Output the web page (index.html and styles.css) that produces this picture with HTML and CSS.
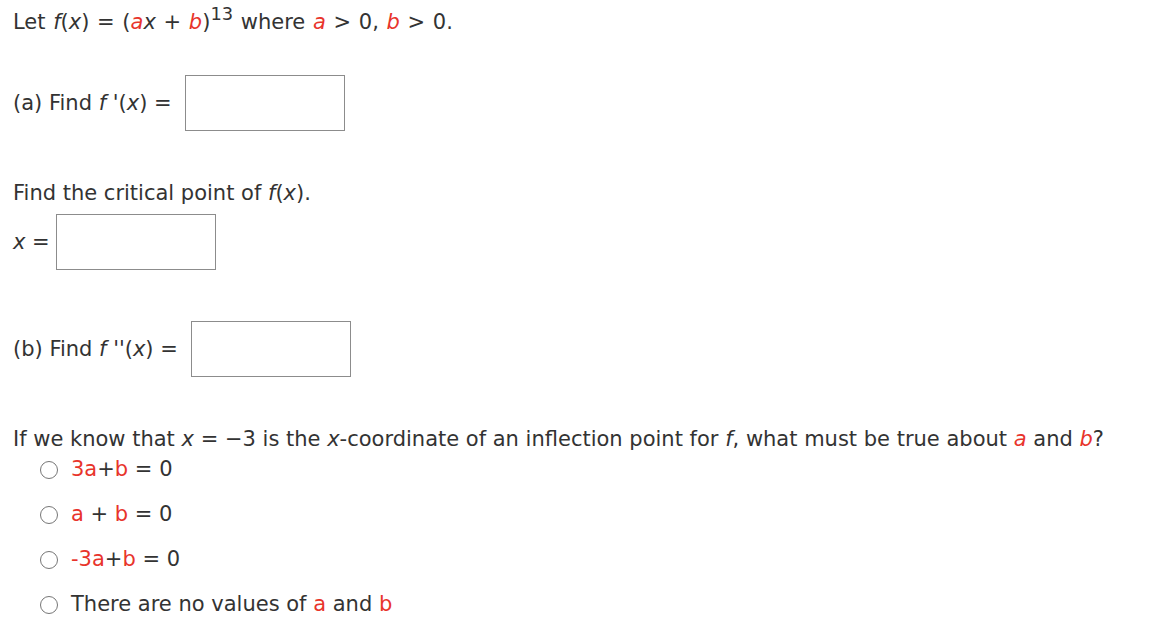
FILE: index.html
```html
<!DOCTYPE html>
<html>
<head>
<meta charset="utf-8">
<link rel="stylesheet" href="styles.css">
</head>
<body>
<div class="page">
  <p class="line first">Let <i>f</i>(<i>x</i>) = (<i class="red">a</i><i>x</i> + <i class="red">b</i>)<sup>13</sup> where <i class="red">a</i> &gt; 0, <i class="red">b</i> &gt; 0.</p>

  <div class="row row-a">
    <span class="label">(a) Find <i>f</i> '(<i>x</i>) =</span>
    <span class="box"></span>
  </div>

  <p class="line crit">Find the critical point of <i>f</i>(<i>x</i>).</p>

  <div class="row row-x">
    <span class="label"><i>x</i> =</span>
    <span class="box"></span>
  </div>

  <div class="row row-b">
    <span class="label">(b) Find <i>f</i> ''(<i>x</i>) =</span>
    <span class="box"></span>
  </div>

  <p class="line question">If we know that <i>x</i> = &minus;3 is the <i>x</i>-coordinate of an inflection point for <i>f</i>, what must be true about <i class="red">a</i> and <i class="red">b</i>?</p>

  <ul class="choices">
    <li><span class="radio"></span><span><span class="red">3a</span>+<span class="red">b</span> = 0</span></li>
    <li><span class="radio"></span><span><span class="red">a</span> + <span class="red">b</span> = 0</span></li>
    <li><span class="radio"></span><span><span class="red">-3a</span>+<span class="red">b</span> = 0</span></li>
    <li><span class="radio"></span><span>There are no values of <span class="red">a</span> and <span class="red">b</span></span></li>
  </ul>
</div>
</body>
</html>
```
FILE: styles.css
```css
html, body {
  margin: 0;
  padding: 0;
  background: #ffffff;
}
body {
  font-family: "DejaVu Sans", Verdana, sans-serif;
  font-size: 21px;
  color: #333333;
}
.page {
  padding: 10px 13px;
}
.line {
  margin: 0;
  line-height: 25px;
  white-space: nowrap;
}
.first {
  word-spacing: 1px;
}
.red {
  color: #e8342b;
}
sup {
  font-size: 0.85em;
  line-height: 0;
  vertical-align: 0.5em;
}
.row {
  display: flex;
  align-items: center;
  line-height: 25px;
}
.label {
  margin-right: 13px;
}
.row-x .label {
  margin-right: 6px;
}
.box {
  display: block;
  width: 158px;
  height: 54px;
  border: 1px solid #8c8c8c;
  background: #fff;
}
.row-a { margin-top: 40px; }
.crit { margin-top: 50px; }
.row-x { margin-top: 8px; }
.row-b { margin-top: 51px; }
.question { margin-top: 50px; }
.choices {
  list-style: none;
  margin: 5px 0 0 0;
  padding: 0 0 0 27px;
  display: flex;
  flex-direction: column;
  gap: 20px;
}
.choices li {
  display: flex;
  align-items: center;
  line-height: 25px;
  gap: 13px;
}
.radio {
  display: block;
  width: 16px;
  height: 16px;
  border: 1.5px solid #767676;
  border-radius: 50%;
  flex: none;
}
```
